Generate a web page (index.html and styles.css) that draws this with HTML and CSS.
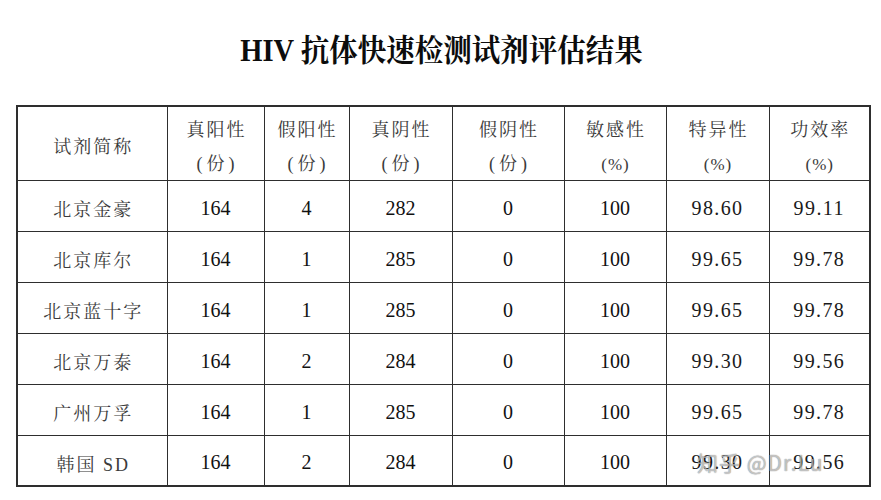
FILE: index.html
```html
<!DOCTYPE html>
<html lang="zh-CN">
<head>
<meta charset="utf-8">
<title>HIV 抗体快速检测试剂评估结果</title>
<link rel="stylesheet" href="styles.css">
</head>
<body>
<div class="page">
  <h1 class="title">HIV 抗体快速检测试剂评估结果</h1>
  <table class="result">
    <colgroup>
      <col class="c1"><col class="c2"><col class="c3"><col class="c4"><col class="c5"><col class="c6"><col class="c7"><col class="c8">
    </colgroup>
    <thead>
      <tr class="head">
        <th class="name">试剂简称</th>
        <th><span class="l1">真阳性</span><span class="l2">(份)</span></th>
        <th><span class="l1">假阳性</span><span class="l2">(份)</span></th>
        <th><span class="l1">真阴性</span><span class="l2">(份)</span></th>
        <th><span class="l1">假阴性</span><span class="l2">(份)</span></th>
        <th><span class="l1">敏感性</span><span class="l2 pct">(%)</span></th>
        <th><span class="l1">特异性</span><span class="l2 pct">(%)</span></th>
        <th><span class="l1">功效率</span><span class="l2 pct">(%)</span></th>
      </tr>
    </thead>
    <tbody>
      <tr><td class="name">北京金豪</td><td>164</td><td>4</td><td>282</td><td>0</td><td>100</td><td class="dec">98.60</td><td class="dec">99.11</td></tr>
      <tr><td class="name">北京库尔</td><td>164</td><td>1</td><td>285</td><td>0</td><td>100</td><td class="dec">99.65</td><td class="dec">99.78</td></tr>
      <tr><td class="name">北京蓝十字</td><td>164</td><td>1</td><td>285</td><td>0</td><td>100</td><td class="dec">99.65</td><td class="dec">99.78</td></tr>
      <tr><td class="name">北京万泰</td><td>164</td><td>2</td><td>284</td><td>0</td><td>100</td><td class="dec">99.30</td><td class="dec">99.56</td></tr>
      <tr><td class="name">广州万孚</td><td>164</td><td>1</td><td>285</td><td>0</td><td>100</td><td class="dec">99.65</td><td class="dec">99.78</td></tr>
      <tr><td class="name">韩国 SD</td><td>164</td><td>2</td><td>284</td><td>0</td><td>100</td><td class="dec">99.30</td><td class="dec">99.56</td></tr>
    </tbody>
  </table>
  <div class="watermark">知乎 @Dr.Lu</div>
</div>
</body>
</html>
```

FILE: styles.css
```css
html, body {
  margin: 0;
  padding: 0;
  background: #ffffff;
}

.page {
  position: relative;
  width: 881px;
  height: 500px;
  overflow: hidden;
  font-family: "Liberation Serif", "Noto Serif CJK SC", "Noto Sans CJK SC", serif;
  color: #111;
}

.title {
  margin: 0;
  padding-top: 33px;
  height: 40px;
  text-align: center;
  font-size: 28.5px;
  line-height: 34px;
  font-weight: 700;
  letter-spacing: 0;
  color: #0c0c0c;
  transform: scaleY(1.08);
  padding-left: 2px;
}

.result {
  margin: 32px 0 0 16px;
  border-collapse: collapse;
  table-layout: fixed;
  width: 853px;
  border: 2px solid #2e2e2e;
}

.c1 { width: 150px; }
.c2 { width: 97px; }
.c3 { width: 85px; }
.c4 { width: 103px; }
.c5 { width: 112px; }
.c6 { width: 102px; }
.c7 { width: 103px; }
.c8 { width: 101px; }

.result th,
.result td {
  border: 1.7px solid #2e2e2e;
  padding: 0;
  text-align: center;
  vertical-align: middle;
  font-weight: 400;
}

.head {
  height: 74px;
}

.result th {
  font-size: 18px;
  color: #3a3a3a;
  vertical-align: top;
  padding-top: 2px;
}

.result th .l1,
.result th .l2 {
  display: block;
  letter-spacing: 2px;
  padding-left: 2px;
}

.result th .l1 {
  line-height: 42px;
}

.result th .l2 {
  line-height: 27px;
  letter-spacing: 4px;
  padding-left: 4px;
}

.result th .pct {
  letter-spacing: 1px;
  padding-left: 1px;
  font-size: 17px;
}

.result th.name {
  vertical-align: middle;
  letter-spacing: 2px;
  padding-left: 2px;
  padding-top: 4px;
}

.result tbody tr {
  height: 51px;
}

.result td {
  font-size: 20px;
  color: #111;
  padding-top: 5px;
}

.result td.name {
  font-size: 18px;
  color: #3a3a3a;
  letter-spacing: 2px;
  padding-left: 2px;
}

.result td.dec {
  font-size: 20px;
  letter-spacing: 1.4px;
  color: #1a1a1a;
}

.watermark {
  position: absolute;
  left: 697px;
  top: 448px;
  font-family: "Noto Sans CJK SC", "Noto Sans", sans-serif;
  font-size: 21px;
  line-height: 28px;
  color: rgba(255, 255, 255, 0.55);
  text-shadow: 0 0 1px rgba(0, 0, 0, 0.35), 0 0 1px rgba(0, 0, 0, 0.35);
  letter-spacing: 1px;
  white-space: nowrap;
}
```
